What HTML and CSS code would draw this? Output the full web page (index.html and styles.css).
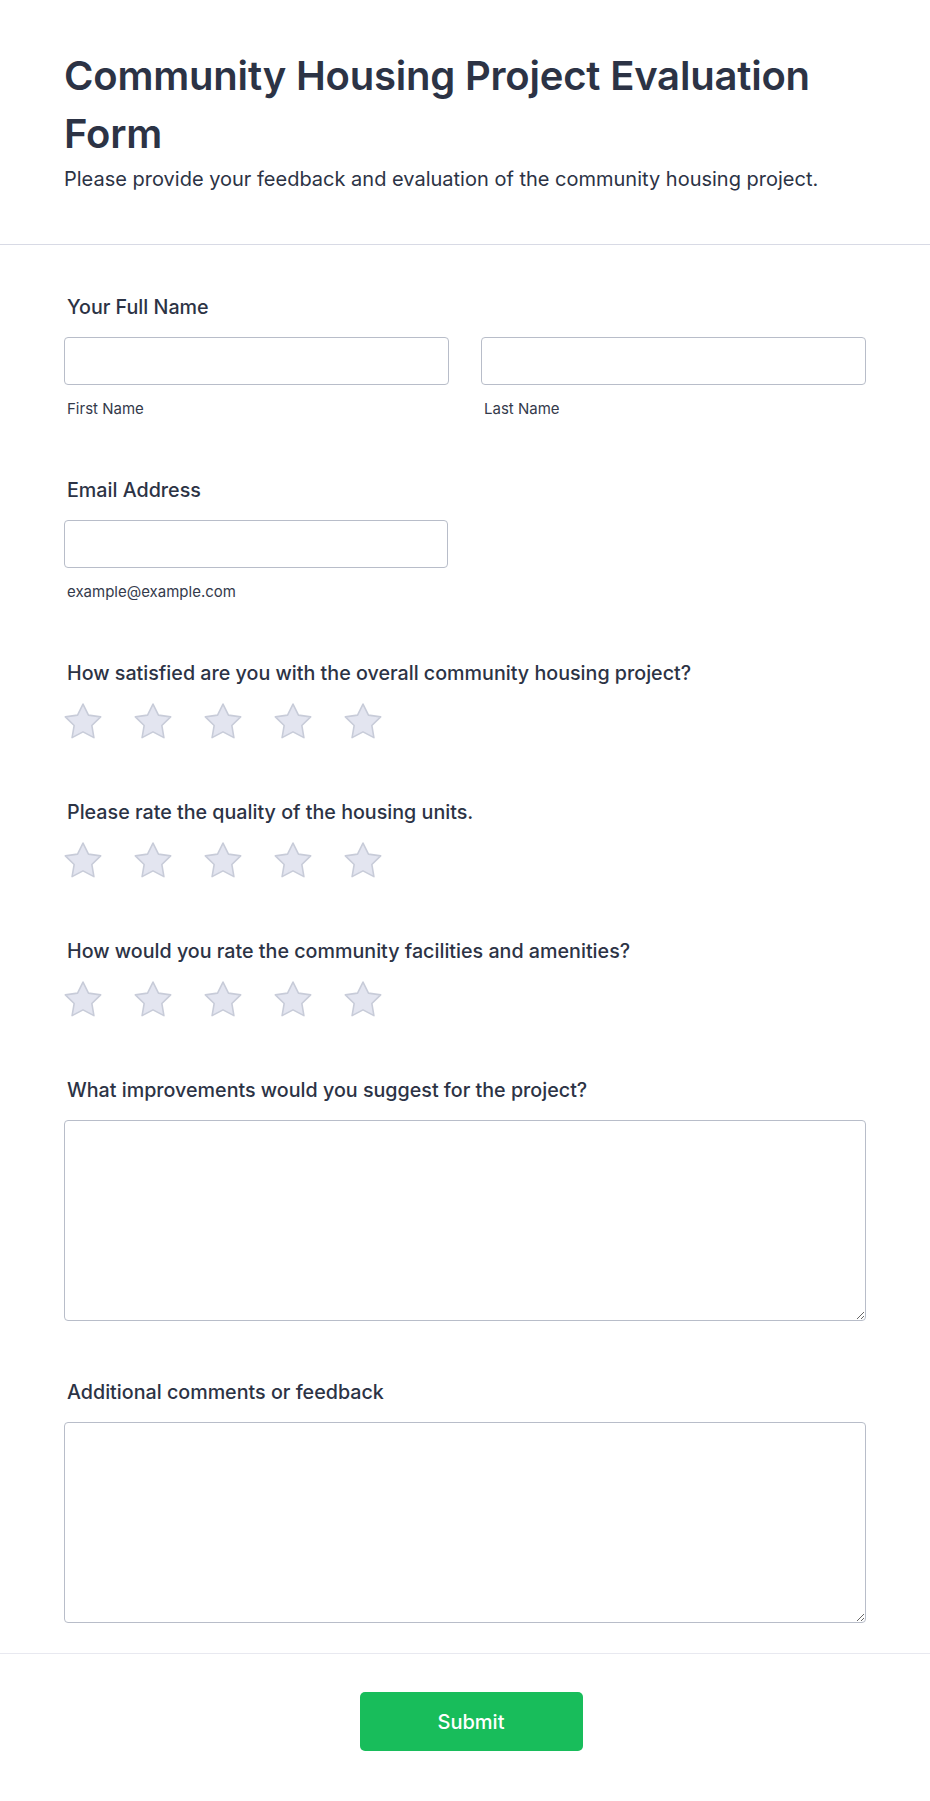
FILE: index.html
```html
<!DOCTYPE html>
<html lang="en">
<head>
<meta charset="utf-8">
<title>Community Housing Project Evaluation Form</title>
<link rel="stylesheet" href="styles.css">
</head>
<body>
<div class="page">
  <header class="form-header">
    <h1 class="form-title">Community Housing Project Evaluation Form</h1>
    <p class="form-subtitle">Please provide your feedback and evaluation of the community housing project.</p>
  </header>

  <form class="form-body">
    <div class="field">
      <label class="field-label">Your Full Name</label>
      <div class="name-row">
        <div class="sub-field">
          <input class="text-input" type="text">
          <span class="sub-label">First Name</span>
        </div>
        <div class="sub-field">
          <input class="text-input" type="text">
          <span class="sub-label">Last Name</span>
        </div>
      </div>
    </div>

    <div class="field">
      <label class="field-label">Email Address</label>
      <div class="sub-field email">
        <input class="text-input" type="email">
        <span class="sub-label">example@example.com</span>
      </div>
    </div>

    <div class="field">
      <label class="field-label">How satisfied are you with the overall community housing project?</label>
      <div class="stars">
        <svg class="star" viewBox="1.3 1.4 21.4 20.4"><polygon points="12,2 15.09,8.26 22,9.27 17,14.14 18.18,21.02 12,17.77 5.82,21.02 7,14.14 2,9.27 8.91,8.26"/></svg>
        <svg class="star" viewBox="1.3 1.4 21.4 20.4"><polygon points="12,2 15.09,8.26 22,9.27 17,14.14 18.18,21.02 12,17.77 5.82,21.02 7,14.14 2,9.27 8.91,8.26"/></svg>
        <svg class="star" viewBox="1.3 1.4 21.4 20.4"><polygon points="12,2 15.09,8.26 22,9.27 17,14.14 18.18,21.02 12,17.77 5.82,21.02 7,14.14 2,9.27 8.91,8.26"/></svg>
        <svg class="star" viewBox="1.3 1.4 21.4 20.4"><polygon points="12,2 15.09,8.26 22,9.27 17,14.14 18.18,21.02 12,17.77 5.82,21.02 7,14.14 2,9.27 8.91,8.26"/></svg>
        <svg class="star" viewBox="1.3 1.4 21.4 20.4"><polygon points="12,2 15.09,8.26 22,9.27 17,14.14 18.18,21.02 12,17.77 5.82,21.02 7,14.14 2,9.27 8.91,8.26"/></svg>
      </div>
    </div>

    <div class="field">
      <label class="field-label">Please rate the quality of the housing units.</label>
      <div class="stars">
        <svg class="star" viewBox="1.3 1.4 21.4 20.4"><polygon points="12,2 15.09,8.26 22,9.27 17,14.14 18.18,21.02 12,17.77 5.82,21.02 7,14.14 2,9.27 8.91,8.26"/></svg>
        <svg class="star" viewBox="1.3 1.4 21.4 20.4"><polygon points="12,2 15.09,8.26 22,9.27 17,14.14 18.18,21.02 12,17.77 5.82,21.02 7,14.14 2,9.27 8.91,8.26"/></svg>
        <svg class="star" viewBox="1.3 1.4 21.4 20.4"><polygon points="12,2 15.09,8.26 22,9.27 17,14.14 18.18,21.02 12,17.77 5.82,21.02 7,14.14 2,9.27 8.91,8.26"/></svg>
        <svg class="star" viewBox="1.3 1.4 21.4 20.4"><polygon points="12,2 15.09,8.26 22,9.27 17,14.14 18.18,21.02 12,17.77 5.82,21.02 7,14.14 2,9.27 8.91,8.26"/></svg>
        <svg class="star" viewBox="1.3 1.4 21.4 20.4"><polygon points="12,2 15.09,8.26 22,9.27 17,14.14 18.18,21.02 12,17.77 5.82,21.02 7,14.14 2,9.27 8.91,8.26"/></svg>
      </div>
    </div>

    <div class="field">
      <label class="field-label">How would you rate the community facilities and amenities?</label>
      <div class="stars">
        <svg class="star" viewBox="1.3 1.4 21.4 20.4"><polygon points="12,2 15.09,8.26 22,9.27 17,14.14 18.18,21.02 12,17.77 5.82,21.02 7,14.14 2,9.27 8.91,8.26"/></svg>
        <svg class="star" viewBox="1.3 1.4 21.4 20.4"><polygon points="12,2 15.09,8.26 22,9.27 17,14.14 18.18,21.02 12,17.77 5.82,21.02 7,14.14 2,9.27 8.91,8.26"/></svg>
        <svg class="star" viewBox="1.3 1.4 21.4 20.4"><polygon points="12,2 15.09,8.26 22,9.27 17,14.14 18.18,21.02 12,17.77 5.82,21.02 7,14.14 2,9.27 8.91,8.26"/></svg>
        <svg class="star" viewBox="1.3 1.4 21.4 20.4"><polygon points="12,2 15.09,8.26 22,9.27 17,14.14 18.18,21.02 12,17.77 5.82,21.02 7,14.14 2,9.27 8.91,8.26"/></svg>
        <svg class="star" viewBox="1.3 1.4 21.4 20.4"><polygon points="12,2 15.09,8.26 22,9.27 17,14.14 18.18,21.02 12,17.77 5.82,21.02 7,14.14 2,9.27 8.91,8.26"/></svg>
      </div>
    </div>

    <div class="field">
      <label class="field-label">What improvements would you suggest for the project?</label>
      <textarea class="text-area"></textarea>
    </div>

    <div class="field">
      <label class="field-label">Additional comments or feedback</label>
      <textarea class="text-area"></textarea>
    </div>
  </form>

  <footer class="form-footer">
    <button class="submit-btn" type="button">Submit</button>
  </footer>
</div>
</body>
</html>
```

FILE: styles.css
```css
* {
  box-sizing: border-box;
}

html, body {
  margin: 0;
  padding: 0;
  background: #ffffff;
}

body {
  font-family: Inter, "Noto Sans", "Liberation Sans", sans-serif;
  color: #2c3345;
}

.page {
  width: 930px;
  min-height: 1801px;
  display: flex;
  flex-direction: column;
  border-bottom: 1px solid #f3f3fa;
}

.form-header {
  padding: 47px 64px 51px;
  border-bottom: 1px solid #d8dae5;
}

.form-title {
  margin: 0;
  font-size: 40px;
  line-height: 57.6px;
  font-weight: 600;
  letter-spacing: -0.2px;
  color: #2c3345;
}

.form-subtitle {
  margin: 4px 0 0;
  font-size: 20px;
  line-height: 27px;
  font-weight: 400;
  color: #2c3345;
}

.form-body {
  display: flex;
  flex-direction: column;
  gap: 58px;
  padding: 49px 64px 30px;
}

.field {
  display: flex;
  flex-direction: column;
  gap: 16px;
}

.field-label {
  padding-left: 3px;
  font-size: 19.7px;
  line-height: 27px;
  font-weight: 500;
  color: #2c3345;
}

.name-row {
  display: grid;
  grid-template-columns: 1fr 1fr;
  gap: 32px;
}

.sub-field {
  display: flex;
  flex-direction: column;
  gap: 13px;
}

.sub-field.email {
  width: 384px;
}

.text-input {
  display: block;
  width: 100%;
  height: 48px;
  border: 1px solid #b8bdc9;
  border-radius: 4px;
  background: #ffffff;
  font: inherit;
}

.sub-label {
  padding-left: 3px;
  font-size: 15px;
  line-height: 21px;
  color: #343a4b;
}

.stars {
  display: flex;
  gap: 32px;
  height: 38px;
  align-items: flex-start;
}

.star {
  width: 38px;
  height: 36px;
  display: block;
}

.star polygon {
  fill: #e3e5f0;
  stroke: #c8ccd9;
  stroke-width: 0.9;
  stroke-linejoin: round;
}

.text-area {
  display: block;
  width: 100%;
  height: 201px;
  border: 1px solid #b8bdc9;
  border-radius: 4px;
  background: #ffffff;
  resize: vertical;
  font: inherit;
}

.form-footer {
  border-top: 1px solid #e8e9f0;
  display: flex;
  justify-content: center;
  padding: 38px 0 50px 12px;
}

.submit-btn {
  width: 223px;
  height: 59px;
  border: none;
  border-radius: 5px;
  background: #18bd5b;
  color: #ffffff;
  font-family: Inter, "Noto Sans", "Liberation Sans", sans-serif;
  font-size: 20px;
  font-weight: 500;
}
```
